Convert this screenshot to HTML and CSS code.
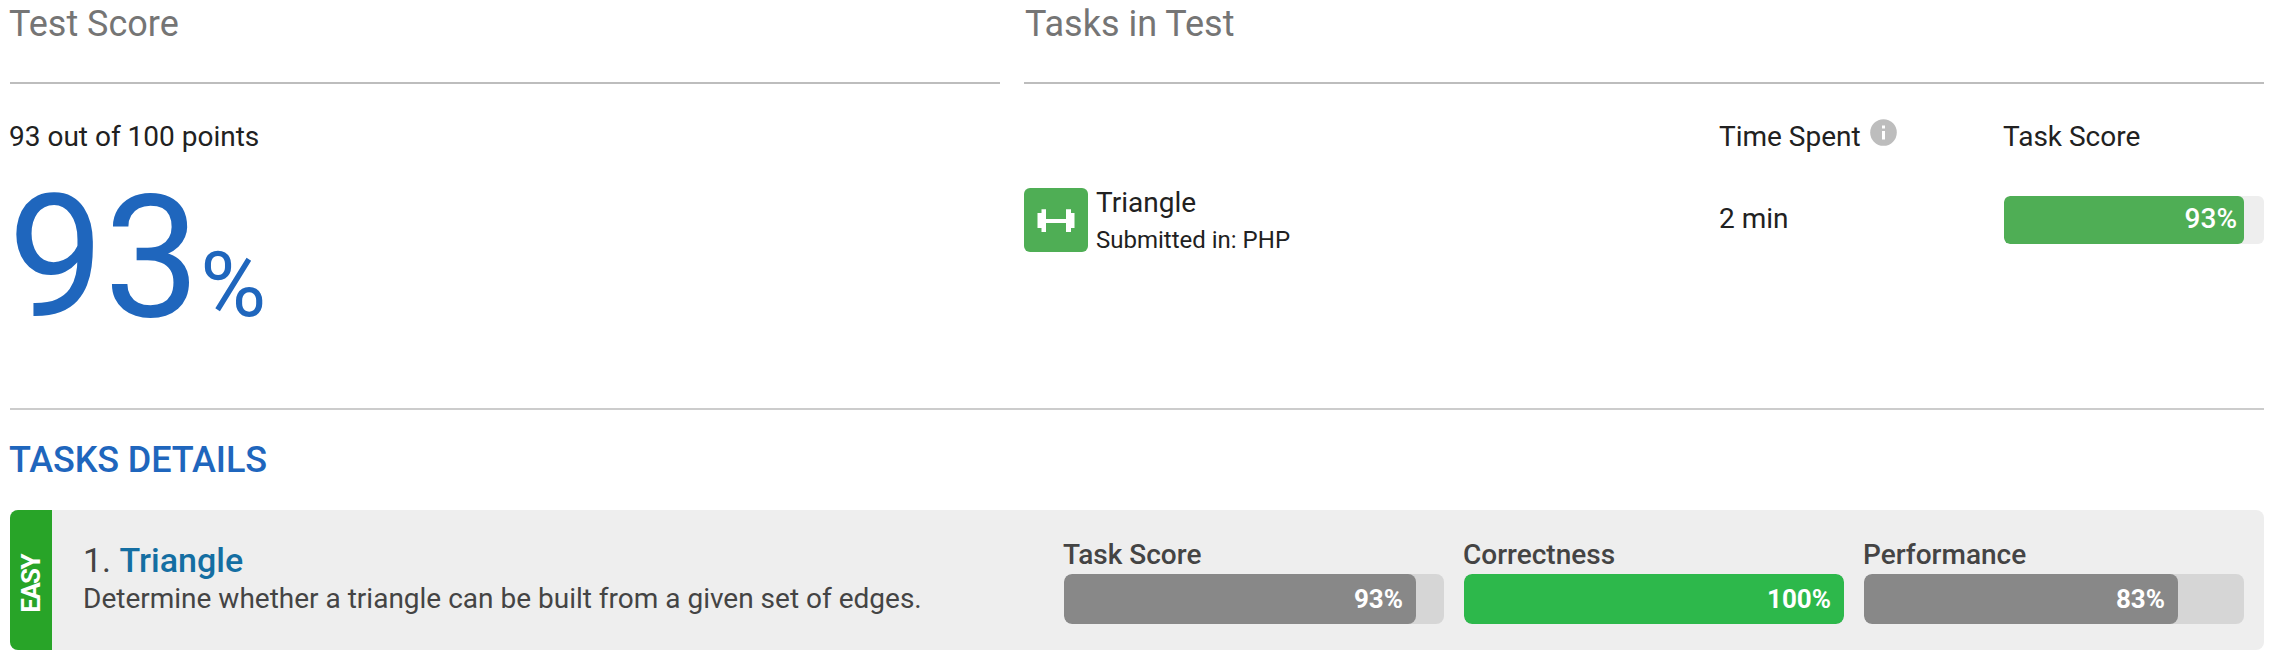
FILE: index.html
```html
<!DOCTYPE html>
<html lang="en">
<head>
<meta charset="utf-8">
<title>Test Score</title>
<link rel="stylesheet" href="styles.css">
</head>
<body>
<main class="report">
  <div class="summary">
    <section class="score">
      <h2 class="section-title title-score">Test Score</h2>
      <p class="points">93 out of 100 points</p>
      <p class="total"><span class="total-value">93</span><span class="total-unit">%</span></p>
    </section>
    <section class="tasks">
      <h2 class="section-title title-tasks">Tasks in Test</h2>
      <div class="task-grid">
        <div></div>
        <div class="col-head">Time Spent
          <svg class="info" viewBox="0 0 27 27"><circle cx="13.5" cy="13.5" r="13.3" fill="#bdbdbd"/><path d="M12 12h3v8.500h-3zM12 6.500h3v3h-3z" fill="#fff"/></svg>
        </div>
        <div class="col-head">Task Score</div>
        <div class="task">
          <svg class="task-icon" viewBox="0 0 64 64"><rect width="64" height="64" rx="6" fill="#4fae55"/><path d="M17.500 21.200H22V31H42V21.200H47V25H50.500V40H47V44H42V35H22V44H17.500V40H13.500V25H17.500z" fill="#fff"/></svg>
          <div class="task-text">
            <div class="task-name">Triangle</div>
            <div class="task-lang">Submitted in: PHP</div>
          </div>
        </div>
        <div class="time">2 min</div>
        <div class="bar bar-top"><div class="fill fill-green" style="width:240px">93%</div></div>
      </div>
    </section>
  </div>
  <section class="details">
    <h2 class="details-title">TASKS DETAILS</h2>
    <article class="card">
      <div class="level"><span class="level-text">EASY</span></div>
      <div class="info-col">
        <h3 class="card-title">1. <a class="card-link">Triangle</a></h3>
        <p class="card-desc">Determine whether a triangle can be built from a given set of edges.</p>
      </div>
      <div class="metrics">
        <div class="metric"><div class="metric-name">Task Score</div><div class="bar bar-card"><div class="fill fill-gray" style="width:352px">93%</div></div></div>
        <div class="metric"><div class="metric-name">Correctness</div><div class="bar bar-card"><div class="fill fill-bright" style="width:380px">100%</div></div></div>
        <div class="metric"><div class="metric-name">Performance</div><div class="bar bar-card"><div class="fill fill-gray" style="width:314px">83%</div></div></div>
      </div>
    </article>
  </section>
</main>
</body>
</html>
```
FILE: styles.css
```css
* { box-sizing: border-box; margin: 0; padding: 0; }
body { background: #fff; color: #212121; font-family: Roboto, "Liberation Sans", sans-serif; font-size: 28px; overflow: hidden; }
.report { width: 2254px; margin-left: 10px; }
.summary { display: grid; grid-template-columns: 990px 1240px; column-gap: 24px; height: 408px; }
.section-title { height: 84px; border-bottom: 2px solid #bdbdbd; color: #757575; font-size: 36px; font-weight: 400; line-height: 49px; }
.title-score { text-indent: -1px; }
.title-tasks { text-indent: 1px; }
.points { margin-top: 32px; line-height: 42px; text-indent: -1px; }
.total { display: flex; align-items: baseline; margin-left: -2px; color: #1f66bd; line-height: 200px; }
.total-value { font-size: 171px; }
.total-unit { font-size: 90px; }
.task-grid { display: grid; grid-template-columns: 696px 284px 260px; grid-template-rows: 40px 64px; row-gap: 32px; margin-top: 32px; }
.col-head { display: flex; margin-left: -1px; line-height: 42px; }
.info { width: 27px; height: 27px; margin: 3px 0 0 9px; }
.task { display: flex; gap: 8px; }
.task-icon { width: 64px; height: 64px; }
.task-name { height: 33px; line-height: 29px; }
.task-lang { font-size: 24px; line-height: 38px; }
.time { line-height: 61px; text-indent: -1px; }
.bar { overflow: hidden; border-radius: 6px; color: #fff; text-align: right; }
.bar-top { height: 48px; margin-top: 8px; background: #eee; font-weight: 500; line-height: 45px; }
.bar-card { height: 50px; border-radius: 8px; background: #d6d6d6; font-size: 26px; font-weight: 700; line-height: 50px; }
.fill { height: 100%; border-radius: inherit; padding-right: 7px; }
.bar-card .fill { padding-right: 13px; }
.fill-green { background: #4fae55; }
.fill-gray { background: #888; }
.fill-bright { background: #2db84b; }
.details { border-top: 2px solid #ccc; }
.details-title { height: 100px; color: #1f66bd; font-size: 36px; font-weight: 500; letter-spacing: -.1px; line-height: 101px; text-indent: -1px; }
.card { display: flex; height: 140px; overflow: hidden; border-radius: 8px; background: #eee; color: #444; }
.level { display: flex; align-items: center; justify-content: center; width: 42px; padding-top: 8px; background: #28a428; }
.level-text { color: #fff; font-size: 26px; font-weight: 700; letter-spacing: -1.6px; line-height: 42px; writing-mode: vertical-rl; transform: rotate(180deg); }
.info-col { width: 1012px; padding: 30px 0 0 31px; }
.card-title { font-size: 34px; font-weight: 400; line-height: 40px; }
.card-link { color: #146ea2; font-weight: 500; }
.card-desc { line-height: 37px; }
.metrics { display: flex; gap: 20px; padding-top: 24px; }
.metric { width: 380px; }
.metric-name { height: 40px; font-weight: 500; line-height: 42px; text-indent: -1px; }
```
